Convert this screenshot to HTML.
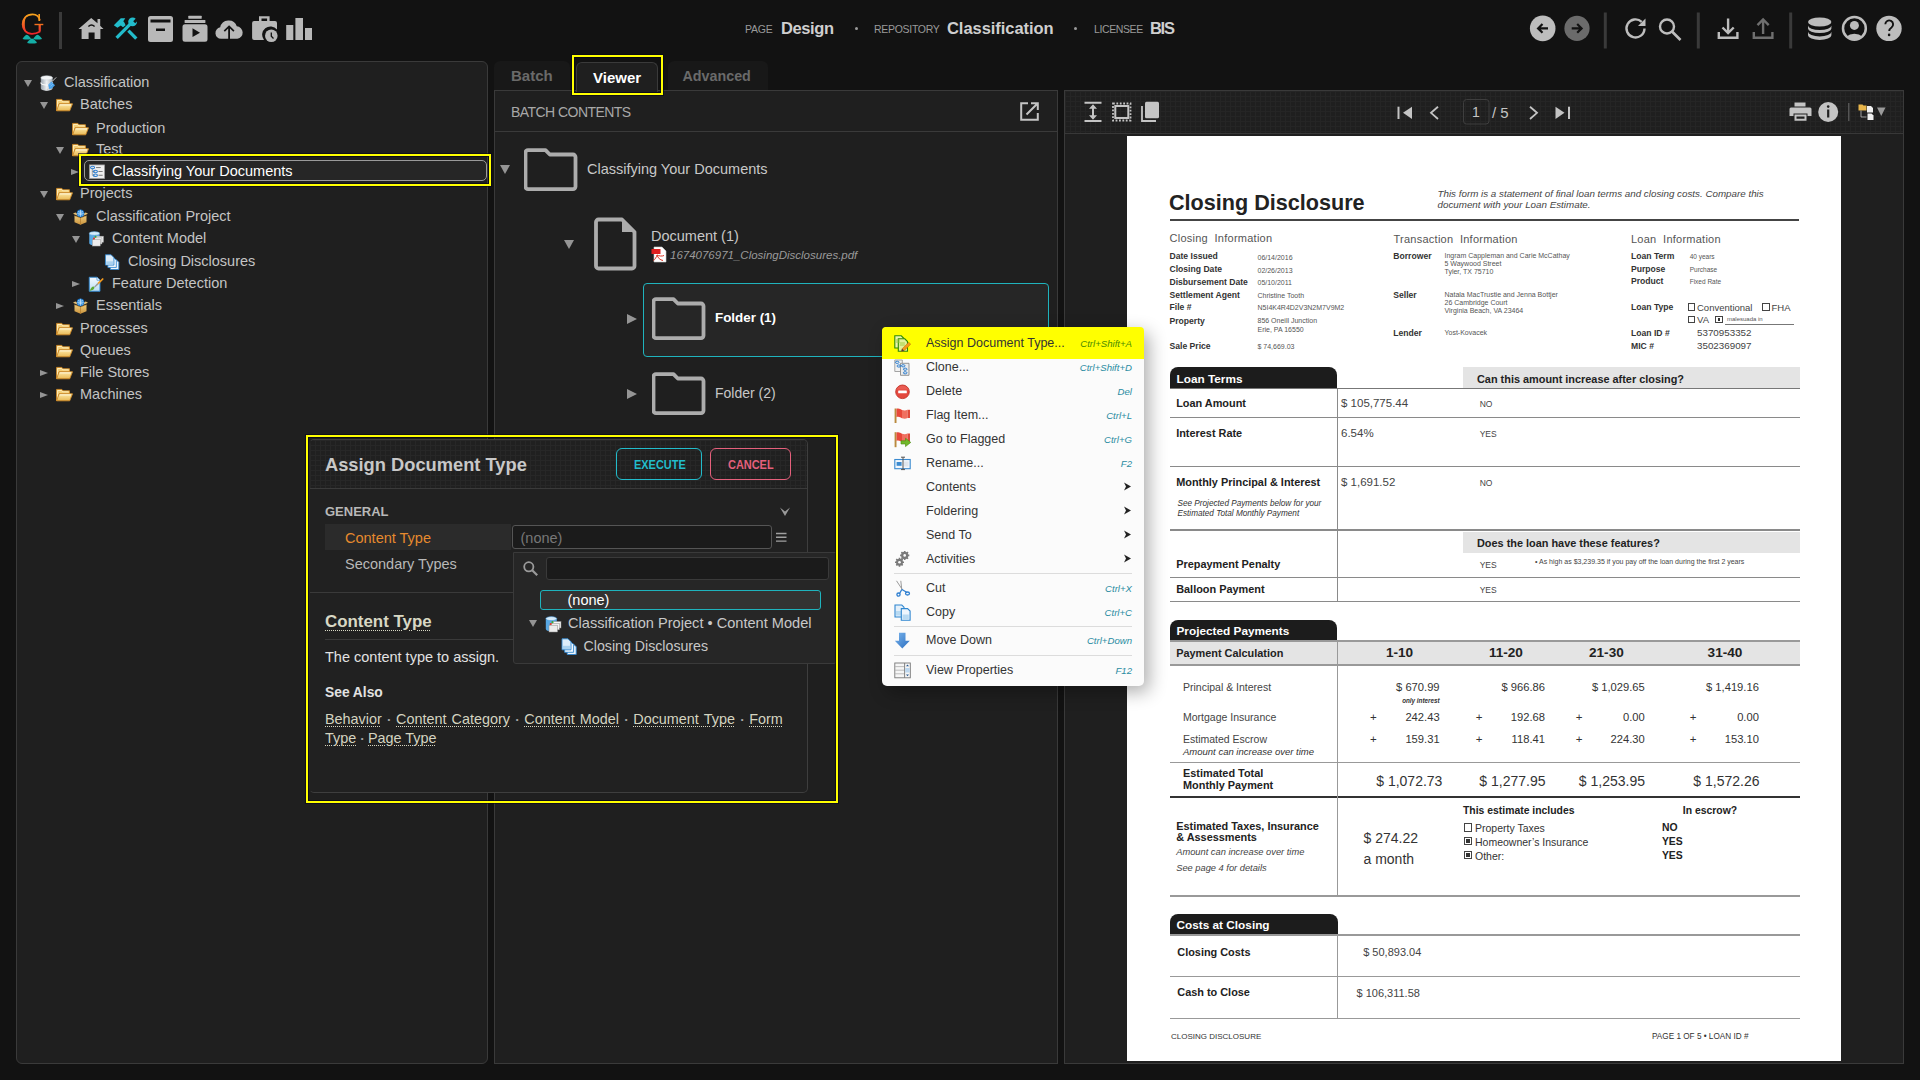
<!DOCTYPE html>
<html><head><meta charset="utf-8">
<style>
*{box-sizing:border-box;margin:0;padding:0}
html,body{width:1920px;height:1080px;overflow:hidden;background:#121212;font-family:"Liberation Sans",sans-serif;color:#c4c4c4}
.a{position:absolute}
.nw{white-space:nowrap}
.panel{position:absolute;background:#1f1f1f;border:1px solid #3a3a3a}
/* header */
.hdr-lbl{position:absolute;top:23px;font-size:10.5px;color:#9a9a9a;letter-spacing:0.2px}
.hdr-val{position:absolute;top:18.5px;font-size:16.5px;font-weight:bold;color:#cfcfcf}
.hdr-dot{position:absolute;top:27px;width:3px;height:3px;border-radius:50%;background:#9a9a9a}
.sep{position:absolute;width:3px;background:#3a3a3a}
/* tree */
.tr{position:absolute;height:22px;font-size:14.5px;line-height:22px;color:#c4c4c4;white-space:nowrap}
.tri-d{position:absolute;width:0;height:0;border-left:4.2px solid transparent;border-right:4.2px solid transparent;border-top:7.3px solid #959595}
.tri-r{position:absolute;width:0;height:0;border-top:3.6px solid transparent;border-bottom:3.6px solid transparent;border-left:8.2px solid #959595}
.ic{position:absolute;width:17px;height:17px}
.lk{text-decoration:underline dotted;text-underline-offset:2px;text-decoration-thickness:1px}
.dt{color:#aaa;font-size:8px;position:relative;top:-2px;padding:0 0.5px}
</style></head>
<body>
<!-- ================= HEADER ================= -->
<div id="header">
<svg class="a" style="left:0;top:0" width="1920" height="57" viewBox="0 0 1920 57">
 <defs>
  <linearGradient id="gG" gradientUnits="userSpaceOnUse" x1="0" y1="14" x2="0" y2="34"><stop offset="0" stop-color="#f7a61c"/><stop offset="1" stop-color="#f0202a"/></linearGradient>
 </defs>
  <path d="M40 20.5C39 16.5 36 14.4 32.6 14.4C26.3 14.4 22.6 18.8 22.6 24.2C22.6 29.8 26.4 33.8 32 33.8C35 33.8 37.6 33 39.6 31.8V24.5" fill="none" stroke="url(#gG)" stroke-width="1.7"/>
 <path d="M22.4 24.2C22.4 19.5 24.5 16.5 27.5 15.3C25.2 17.5 24.8 20.5 24.8 24.2C24.8 28 25.5 30.8 27.8 32.8C24.6 31.5 22.4 28.5 22.4 24.2Z" fill="url(#gG)"/>
 <path d="M38.8 30.5V25h1.9v6.5z" fill="url(#gG)"/>
 <path d="M34.5 24.5H43.3" stroke="#f0701e" stroke-width="1.4"/>
 <path d="M39.2 14v7" stroke="#f49a1c" stroke-width="1.6"/>
 <g fill="#14aea6">
  <path d="M22.5 39.1C23.8 36.8 25.2 35.2 26.8 34.8C28.4 35.2 29.9 36.8 31.2 39.1Q26.8 40.1 22.5 39.1Z"/>
  <path d="M33.2 39.1C34.5 36.8 35.9 35.2 37.5 34.8C39.1 35.2 40.7 36.8 42.1 39.1Q37.6 40.1 33.2 39.1Z"/>
  <path d="M27.1 43C28.4 40.6 30.2 38.9 32 38.5C33.8 38.9 35.6 40.6 37 43Q32 44 27.1 43Z"/>
 </g>
 <rect x="59" y="12" width="3" height="37" fill="#3a3a3a"/>
 <g fill="#b8b8b8">
  <!-- home -->
  <path d="M78.5 29 L91.2 18 L97.5 23.3 L97.5 19 L100.2 19 L100.2 25.7 L103.5 29 L100.4 29 L100.4 39 L94.6 39 L94.6 32.5 L88.6 32.5 L88.6 39 L81.6 39 L81.6 29Z"/>
  <!-- archive -->
  <path fill-rule="evenodd" d="M150.5 16h20a2.5 2.5 0 0 1 2.5 2.5v21a2.5 2.5 0 0 1 -2.5 2.5h-20a2.5 2.5 0 0 1 -2.5 -2.5v-21a2.5 2.5 0 0 1 2.5 -2.5z M150.5 19.5v3h20v-3z M156 28.5v2.5h9v-2.5z"/>
  <!-- play box -->
  <rect x="188.3" y="15.8" width="13.4" height="3" rx="0.5"/>
  <rect x="184.6" y="20" width="20.8" height="2.9" rx="0.5"/>
  <path fill-rule="evenodd" d="M185 24.2h20a2.5 2.5 0 0 1 2.5 2.5v12.5a2.5 2.5 0 0 1 -2.5 2.5h-20a2.5 2.5 0 0 1 -2.5 -2.5v-12.5a2.5 2.5 0 0 1 2.5 -2.5z M192.5 28.3v8.7l7.5-4.35z"/>
  <!-- cloud -->
  <path fill-rule="evenodd" d="M221 38.8 a5.8 5.8 0 0 1 -0.8 -11.5 a8.6 8.6 0 0 1 16.6 -1 a6.3 6.3 0 0 1 0.6 12.5z M228.2 38.8v-10.3l-3.3 3.3-1.2-1.2 5.4-5.4 5.4 5.4-1.2 1.2-3.3-3.3v10.3z"/>
  <!-- briefcase -->
  <path fill-rule="evenodd" d="M259 16.2h10.6v4.8h5.4a2 2 0 0 1 2 2v6.5 a8 8 0 0 0 -13 10.5h-9.9a2 2 0 0 1 -2 -2v-15a2 2 0 0 1 2 -2h4.9z M261.5 18.4v2.6h5.6v-2.6z"/>
  <circle cx="271.3" cy="35.8" r="6.3"/>
  <!-- bars -->
  <rect x="286.2" y="25" width="7.1" height="15"/>
  <rect x="295.4" y="18" width="7.6" height="22"/>
  <rect x="305" y="28" width="7" height="12"/>
 </g>
 <path d="M271.3 32.5v3.8l2.2 2.2" stroke="#121212" stroke-width="1.3" fill="none"/>
 <path d="M88.4 26.6Q91.4 23.4 94.6 26.6" stroke="#121212" stroke-width="1.4" fill="none"/>
 <!-- tools -->
 <g stroke="#22bccb" stroke-width="3.3" fill="none" stroke-linecap="butt">
  <path d="M116.6 37.8L131.2 23.2"/>
  <path d="M128.4 30.6L136.3 38.6"/>
 </g>
 <g fill="#22bccb">
  <circle cx="132.6" cy="21.8" r="4.4"/>
  <path d="M113.8 25.2L120.8 18.3H125.3L123.3 21.2L124.5 22.8L125.6 25.2L123 27.2L120.8 25.6L117.4 27.8Z"/>
 </g>
 <path d="M133.2 21.2L136.6 17.8L138.6 19.8L135.2 23.2Z" fill="#121212"/>
</svg>
<div class="hdr-lbl" style="left:745px;letter-spacing:-0.25px">PAGE</div>
<div class="hdr-val" style="left:781px;letter-spacing:-0.4px">Design</div>
<div class="hdr-dot" style="left:855px"></div>
<div class="hdr-lbl" style="left:874px;letter-spacing:-0.3px">REPOSITORY</div>
<div class="hdr-val" style="left:947px;letter-spacing:-0.05px">Classification</div>
<div class="hdr-dot" style="left:1074px"></div>
<div class="hdr-lbl" style="left:1094px;letter-spacing:-0.4px">LICENSEE</div>
<div class="hdr-val" style="left:1150px;letter-spacing:-1.3px">BIS</div>
<svg class="a" style="left:1500px;top:0" width="420" height="57" viewBox="1500 0 420 57">
 <circle cx="1542.7" cy="28.4" r="12.8" fill="#bdbdbd"/>
 <path d="M1548 28.4h-9.5M1542.5 24l-4.4 4.4 4.4 4.4" stroke="#121212" stroke-width="2.2" fill="none"/>
 <circle cx="1577" cy="28.4" r="12.6" fill="#6b6b6b"/>
 <path d="M1571.7 28.4h9.5M1577.2 24l4.4 4.4-4.4 4.4" stroke="#121212" stroke-width="2.2" fill="none"/>
 <rect x="1603.8" y="12.5" width="3" height="36" fill="#3a3a3a"/>
 <rect x="1696.8" y="12.5" width="3" height="36" fill="#3a3a3a"/>
 <rect x="1789.2" y="12.5" width="3" height="36" fill="#3a3a3a"/>
 <g stroke="#bdbdbd" stroke-width="2.4" fill="none">
  <path d="M1644.5 28.5 a9 9 0 1 1 -2.8 -6.6"/>
  <circle cx="1667" cy="26.5" r="7"/>
  <path d="M1672 31.5l8.5 8.5" stroke-width="2.6"/>
  <path d="M1718.8 32v5.8h18.6v-5.8M1728.1 18.6v14.5M1722.5 27.5l5.6 5.6 5.6-5.6"/>
 </g>
 <path d="M1645.5 18.5v7.5h-7.5z" fill="#bdbdbd"/>
 <g stroke="#6f6f6f" stroke-width="2.4" fill="none">
  <path d="M1753.8 32v5.8h18.6v-5.8M1763.1 34v-14.5M1757.5 25.1l5.6-5.6 5.6 5.6"/>
 </g>
 <g fill="#bdbdbd">
  <ellipse cx="1819.7" cy="22" rx="11.7" ry="4.6"/>
  <path d="M1808 25.5v3a11.7 4.6 0 0 0 23.4 0v-3a11.7 4.6 0 0 1 -23.4 0z"/>
  <path d="M1808 31.8v3.5a11.7 4.6 0 0 0 23.4 0v-3.5a11.7 4.6 0 0 1 -23.4 0z"/>
 </g>
 <circle cx="1854.4" cy="28.4" r="11.4" stroke="#bdbdbd" stroke-width="2.5" fill="none"/>
 <circle cx="1854.4" cy="25.4" r="4.5" fill="#bdbdbd"/>
 <path d="M1846.5 36.5a10 7 0 0 1 15.8 0a11 11 0 0 1 -15.8 0z" fill="#bdbdbd"/>
 <circle cx="1889" cy="28.4" r="12.7" fill="#bdbdbd"/>
 <path d="M1885.3 24.3a3.9 3.9 0 1 1 6.2 3.2c-1.6 1.1-2.3 1.8-2.3 3.6" stroke="#121212" stroke-width="1.9" fill="none"/><circle cx="1889.1" cy="34.9" r="1.3" fill="#121212"/>
</svg>
</div>

<!-- ================= LEFT PANEL ================= -->
<div class="panel" style="left:16px;top:61px;width:472px;height:1003px;border-radius:6px"></div>

<svg width="0" height="0" style="position:absolute">
<defs>
 <linearGradient id="fy" x1="0" y1="0" x2="0" y2="1"><stop offset="0" stop-color="#fde9a8"/><stop offset="1" stop-color="#e9b955"/></linearGradient>
 <linearGradient id="dbg" x1="0" y1="0" x2="1" y2="0"><stop offset="0" stop-color="#9aa4ad"/><stop offset="0.5" stop-color="#eef1f4"/><stop offset="1" stop-color="#a7b0b8"/></linearGradient>
 <linearGradient id="bxg" x1="0" y1="0" x2="0" y2="1"><stop offset="0" stop-color="#f0cc7a"/><stop offset="1" stop-color="#c9923c"/></linearGradient>
 <symbol id="i-fold" viewBox="0 0 17 13">
  <path d="M0.6 0.9h5.2l1.3 1.4h6.4v3H3.1L0.6 12.3z" fill="#f5cf76" stroke="#cf8a28" stroke-width="0.9" stroke-linejoin="round"/>
  <path d="M1.6 2v8M1.6 2h3.8l1.2 1.3h6" stroke="#fff4cc" stroke-width="0.8" fill="none"/>
  <path d="M3.1 5.3h13.4l-2.8 7H0.6z" fill="url(#fy)" stroke="#cf8a28" stroke-width="0.9" stroke-linejoin="round"/>
  <path d="M3.8 6.4h11.3" stroke="#fffbe6" stroke-width="0.9"/>
 </symbol>
 <symbol id="i-db" viewBox="0 0 17 16">
  <path d="M0.8 2.8v10.4c0 1.5 2.6 2.5 5.9 2.5s5.9-1 5.9-2.5v-10.4z" fill="url(#dbg)"/>
  <ellipse cx="6.7" cy="2.8" rx="5.9" ry="2.1" fill="#f3f5f7" stroke="#c5ccd2" stroke-width="0.5"/>
  <path d="M0.8 7.6c0 1.5 2.6 2.5 5.9 2.5s5.9-1 5.9-2.5" stroke="#f8f8f8" stroke-width="1.1" fill="none"/>
  <path d="M8.2 9.8l3.2-3.2 3.6 3.6-3.2 3.2-2.6 0.6z" fill="#4aa2ea"/>
  <path d="M9.3 10.2l2.4-2.4M10.5 11.4l2.4-2.4" stroke="#9fd0f8" stroke-width="0.6"/>
  <path d="M8.6 13.2l-3 3" stroke="#c8c8c8" stroke-width="1"/>
  <path d="M12.6 6l3.6-3.6" stroke="#c8c8c8" stroke-width="1"/>
 </symbol>
 <symbol id="i-box" viewBox="0 0 16 16">
  <path d="M2 6.8l6 2.2 6-2.2v6.4l-6 2.6-6-2.6z" fill="url(#bxg)"/>
  <path d="M8 9v6.8" stroke="#b07a2c" stroke-width="0.7"/>
  <path d="M0.5 4.8l2.2-1.2 5.3 2.1-1.8 1.6zM15.5 4.8l-2.2-1.2-5.3 2.1 1.8 1.6z" fill="#e9c072"/>
  <path d="M2 6.8l6 2.2 6-2.2" stroke="#c99545" stroke-width="0.6" fill="none"/>
  <circle cx="8" cy="4.3" r="3.6" fill="#2f8fe0" stroke="#1a6fc0" stroke-width="0.5"/>
  <path d="M4.8 4.3h6.4M8 0.9v6.8M5.6 2.4c1.4 0.9 3.4 0.9 4.8 0M5.6 6.2c1.4-0.9 3.4-0.9 4.8 0" stroke="#e2f0fc" stroke-width="0.6" fill="none"/>
 </symbol>
 <symbol id="i-cm" viewBox="0 0 17 17">
  <path d="M0.8 2.6v10.4c0 1.3 2.4 2.3 5.5 2.3s5.5-1 5.5-2.3v-10.4z" fill="#58a8e4"/>
  <ellipse cx="6.3" cy="2.6" rx="5.5" ry="2" fill="#d4ebfa" stroke="#3d8fd0" stroke-width="0.5"/>
  <rect x="7.5" y="5.5" width="8.5" height="6.5" fill="#f6f6f6" stroke="#8a8a8a" stroke-width="0.5"/>
  <rect x="5.8" y="7.3" width="8.5" height="6.5" fill="#f2f2f2" stroke="#8a8a8a" stroke-width="0.5"/>
  <rect x="4" y="9.2" width="8.5" height="6.8" fill="#ececec" stroke="#8a8a8a" stroke-width="0.5"/>
  <circle cx="5.8" cy="8" r="1.1" fill="#e03a2a"/>
  <circle cx="7.5" cy="6.2" r="1.1" fill="#3aa83a"/>
 </symbol>
 <symbol id="i-docs" viewBox="0 0 17 17">
  <path d="M6.2 5.8h6l3 3v7.7h-9z" fill="#eef6fd" stroke="#2f86cf" stroke-width="0.9"/>
  <path d="M3.6 3.6h6l3 3v7.7h-9z" fill="#eef6fd" stroke="#2f86cf" stroke-width="0.9"/>
  <path d="M1 0.8h6l3 3v8h-9z" fill="#dcedfa" stroke="#2f86cf" stroke-width="0.9"/>
  <path d="M1.8 7.8h7.4v3.2h-7.4z" fill="#a9d2f0"/>
 </symbol>
 <symbol id="i-feat" viewBox="0 0 17 17">
  <defs><linearGradient id="fdg" x1="0" y1="0" x2="0" y2="1"><stop offset="0" stop-color="#f6fbff"/><stop offset="1" stop-color="#b9dcf4"/></linearGradient></defs>
  <path d="M0.8 1.3h8.2l3.2 3.2v11.7h-11.4z" fill="url(#fdg)" stroke="#2f86cf" stroke-width="1"/>
  <path d="M9 1.3v3.2h3.2" fill="#fff" stroke="#2f86cf" stroke-width="0.7"/>
  <path d="M9.5 7.5l5.5-5.5 1.3 1.3-5.5 5.5z" fill="#f39a1e"/>
  <path d="M6 11.5l3.5-4 1.3 1.3-4 3.5z" fill="#9a9a9a"/>
  <path d="M1 16l2-3.5 2-1.5 1.5 1.5-1.5 2z" fill="#5aa832"/>
 </symbol>
 <symbol id="i-batch" viewBox="0 0 17 15">
  <rect x="0.5" y="0.5" width="16" height="14.5" fill="#efefef" stroke="#9b9b9b" stroke-width="0.8"/>
  <path d="M3.5 3.5v8h3M3.5 7.5h3" stroke="#6b6b6b" stroke-width="0.6" fill="none"/>
  <ellipse cx="3.8" cy="3.3" rx="2.2" ry="1.4" fill="none" stroke="#2f7fd0" stroke-width="1.1"/>
  <ellipse cx="6.8" cy="7.5" rx="2.2" ry="1.4" fill="none" stroke="#2f7fd0" stroke-width="1.1"/>
  <ellipse cx="6.8" cy="11.5" rx="2.2" ry="1.4" fill="none" stroke="#2f7fd0" stroke-width="1.1"/>
  <path d="M7.5 3.3h5M10 7.5h4.5M10 11.5h4.5" stroke="#666" stroke-width="0.9"/>
 </symbol>
</defs></svg>
<div id="tree">
<div class="tri-d" style="left:24px;top:80px"></div><svg class="ic" style="left:40px;top:75px;width:17px;height:16px"><use href="#i-db"/></svg><div class="tr" style="left:64px;top:71px">Classification</div>
<div class="tri-d" style="left:40px;top:102px"></div><svg class="ic" style="left:56px;top:97px;width:17px;height:16px"><use href="#i-fold"/></svg><div class="tr" style="left:80px;top:93px">Batches</div>
<svg class="ic" style="left:72px;top:120.5px;width:17px;height:16px"><use href="#i-fold"/></svg><div class="tr" style="left:96px;top:116.5px">Production</div>
<div class="tri-d" style="left:56px;top:147px"></div><svg class="ic" style="left:72px;top:142px;width:17px;height:16px"><use href="#i-fold"/></svg><div class="tr" style="left:96px;top:138px">Test</div>
<div class="tri-d" style="left:40px;top:191px"></div><svg class="ic" style="left:56px;top:186px;width:17px;height:16px"><use href="#i-fold"/></svg><div class="tr" style="left:80px;top:182px">Projects</div>
<div class="tri-d" style="left:56px;top:214px"></div><svg class="ic" style="left:72px;top:209px;width:17px;height:16px"><use href="#i-box"/></svg><div class="tr" style="left:96px;top:205px">Classification Project</div>
<div class="tri-d" style="left:72px;top:236px"></div><svg class="ic" style="left:88px;top:231px;width:17px;height:16px"><use href="#i-cm"/></svg><div class="tr" style="left:112px;top:227px">Content Model</div>
<svg class="ic" style="left:104px;top:253.5px;width:17px;height:16px"><use href="#i-docs"/></svg><div class="tr" style="left:128px;top:249.5px">Closing Disclosures</div>
<div class="tri-r" style="left:72px;top:280.5px"></div><svg class="ic" style="left:88px;top:276px;width:17px;height:16px"><use href="#i-feat"/></svg><div class="tr" style="left:112px;top:272px">Feature Detection</div>
<div class="tri-r" style="left:56px;top:302.5px"></div><svg class="ic" style="left:72px;top:298px;width:17px;height:16px"><use href="#i-box"/></svg><div class="tr" style="left:96px;top:294px">Essentials</div>
<svg class="ic" style="left:56px;top:320.5px;width:17px;height:16px"><use href="#i-fold"/></svg><div class="tr" style="left:80px;top:316.5px">Processes</div>
<svg class="ic" style="left:56px;top:343px;width:17px;height:16px"><use href="#i-fold"/></svg><div class="tr" style="left:80px;top:339px">Queues</div>
<div class="tri-r" style="left:40px;top:369.5px"></div><svg class="ic" style="left:56px;top:365px;width:17px;height:16px"><use href="#i-fold"/></svg><div class="tr" style="left:80px;top:361px">File Stores</div>
<div class="tri-r" style="left:40px;top:391.5px"></div><svg class="ic" style="left:56px;top:387px;width:17px;height:16px"><use href="#i-fold"/></svg><div class="tr" style="left:80px;top:383px">Machines</div>
<div class="tri-r" style="left:71px;top:168.5px"></div><div class="a" style="left:84px;top:160px;width:403px;height:21px;border:1px solid #9a9a9a;border-radius:5px;background:#262626"></div><svg class="ic" style="left:89px;top:164px;width:16px;height:15px"><use href="#i-batch"/></svg><div class="tr" style="left:112px;top:160px;color:#fff">Classifying Your Documents</div><div class="a" style="left:79px;top:154px;width:412px;height:32px;border:2.5px solid #ffff00;box-shadow:0 0 0 1px rgba(5,5,25,0.6),inset 0 0 0 1px rgba(5,5,25,0.7)"></div>
</div>
<!-- ================= TABS ================= -->
<div class="a" style="left:494px;top:61px;width:76px;height:30px;background:#181818;border-radius:6px 6px 0 0"></div>
<div class="a" style="left:668px;top:61px;width:100px;height:30px;background:#181818;border-radius:6px 6px 0 0"></div>
<div class="a nw" style="left:511px;top:65px;font-size:15px;line-height:22px;font-weight:bold;color:#6a6a6a">Batch</div>
<div class="a nw" style="left:682.5px;top:65px;font-size:14.3px;line-height:22px;font-weight:bold;color:#6a6a6a">Advanced</div>

<!-- ================= MIDDLE PANEL ================= -->
<div class="panel" style="left:494px;top:90px;width:564px;height:974px"></div>
<div class="a" style="left:576px;top:62px;width:82px;height:30px;background:#1f1f1f;border:1px solid #3a3a3a;border-bottom:none;border-radius:6px 6px 0 0"></div>
<div class="a nw" style="left:593px;top:66.5px;font-size:15px;line-height:22px;font-weight:bold;color:#fff">Viewer</div>
<div class="a" style="left:572px;top:55px;width:91px;height:40px;border:2.5px solid #ffff00;box-shadow:0 0 0 1px rgba(5,5,25,0.6),inset 0 0 0 1px rgba(5,5,25,0.7)"></div>
<div class="a nw" style="left:511px;top:101.5px;font-size:14px;line-height:20px;color:#a8a8a8;letter-spacing:-0.55px">BATCH CONTENTS</div>
<div class="a" style="left:495px;top:130.5px;width:562px;height:1px;background:#3a3a3a"></div>
<svg class="a" style="left:1018px;top:100px" width="24" height="24" viewBox="0 0 24 24">
 <path d="M10 3.2H3.2v16.6h16.6V13" stroke="#c4c4c4" stroke-width="2" fill="none"/>
 <path d="M8.5 14.5L19 4M13 3.2h6.8V10" stroke="#c4c4c4" stroke-width="2" fill="none"/>
</svg>
<svg width="0" height="0" style="position:absolute"><defs>
 <symbol id="bigfold" viewBox="0 0 54 43"><path d="M4 2.2h17.5l4.3 4.3h23.2a2.5 2.5 0 0 1 2.5 2.5v29.6a2.5 2.5 0 0 1 -2.5 2.5h-45a2.5 2.5 0 0 1 -2.5 -2.5v-34a2.5 2.5 0 0 1 2.5 -2.5z" fill="none" stroke="#acacac" stroke-width="3.8" stroke-linejoin="round"/></symbol>
</defs></svg>
<div class="tri-d" style="left:499.5px;top:165px;border-left-width:5px;border-right-width:5px;border-top-width:9px"></div>
<svg class="a" style="left:524px;top:148px" width="54" height="43"><use href="#bigfold"/></svg>
<div class="a nw" style="left:587px;top:158px;font-size:14.5px;line-height:22px;color:#c8c8c8">Classifying Your Documents</div>

<div class="tri-d" style="left:563.5px;top:240px;border-left-width:5px;border-right-width:5px;border-top-width:9px"></div>
<svg class="a" style="left:593.5px;top:217px" width="44" height="54" viewBox="0 0 44 54"><path d="M4.5 2.5h23.5l12.5 12.5v34a2.5 2.5 0 0 1 -2.5 2.5h-33.5a2.5 2.5 0 0 1 -2.5 -2.5v-44a2.5 2.5 0 0 1 2.5 -2.5z" fill="none" stroke="#acacac" stroke-width="3.8" stroke-linejoin="round"/><path d="M28 2.5v12.5h12.5z" fill="#acacac"/></svg>
<div class="a nw" style="left:651px;top:225px;font-size:14.5px;line-height:22px;color:#c8c8c8">Document (1)</div>
<svg class="a" style="left:651px;top:246px" width="17" height="17" viewBox="0 0 17 17"><path d="M3 1h8l4 4v11h-12z" fill="#fff" stroke="#ccc" stroke-width="0.6"/><path d="M0.5 3h9v5h-9z" fill="#e02020"/><path d="M6 9c1 3 3 5 6 5.5M6 9c-0.5 2-2 4.5-3.5 5.5M6 9c2 1 5 1.5 7 0.5" stroke="#d32" stroke-width="1" fill="none"/></svg>
<div class="a nw" style="left:670px;top:247px;font-size:11.5px;line-height:16px;color:#9a9a9a;font-style:italic">1674076971_ClosingDisclosures.pdf</div>

<div class="a" style="left:642.5px;top:283px;width:406.5px;height:73.5px;border:1.5px solid #1fb3bd;border-radius:4px;background:#262626"></div>
<div class="tri-r" style="left:627px;top:313.5px;border-top-width:5.5px;border-bottom-width:5.5px;border-left-width:10px"></div>
<svg class="a" style="left:652px;top:297px" width="54" height="43"><use href="#bigfold"/></svg>
<div class="a nw" style="left:715px;top:307px;font-size:13.4px;line-height:22px;color:#fff;font-weight:bold">Folder (1)</div>

<div class="tri-r" style="left:627px;top:388.5px;border-top-width:5.5px;border-bottom-width:5.5px;border-left-width:10px"></div>
<svg class="a" style="left:652px;top:372px" width="54" height="43"><use href="#bigfold"/></svg>
<div class="a nw" style="left:715px;top:382px;font-size:14px;line-height:22px;color:#c8c8c8">Folder (2)</div>


<!-- ================= RIGHT PANEL ================= -->
<div class="panel" style="left:1064px;top:90px;width:840px;height:974px"></div>
<div class="a" style="left:1065px;top:91px;width:838px;height:42.5px;background-color:#1f1f1f;background-image:linear-gradient(#252525 1px,transparent 1px),linear-gradient(90deg,#252525 1px,transparent 1px);background-size:5px 5px;border-bottom:1px solid #383838"></div>
<svg class="a" style="left:1064px;top:90px" width="840" height="44" viewBox="1064 90 840 44">
 <g stroke="#c4c4c4" fill="none">
  <path d="M1084.5 102.8h17M1084.5 121h17" stroke-width="2"/>
  <path d="M1093 106v12" stroke-width="2"/>
  <rect x="1115.3" y="106" width="13" height="12" stroke-width="2"/>
  <rect x="1113" y="103.5" width="17.5" height="17" stroke-width="1.8" stroke-dasharray="1.8 1.6"/>
  <path d="M1142 106v15h14" stroke-width="1.8"/>
 </g>
 <g fill="#c4c4c4">
  <path d="M1093 104.3l4 4.5h-8z M1093 119.7l4-4.5h-8z"/>
  <rect x="1145" y="101.8" width="14" height="16.5" rx="1.5"/>
  <rect x="1397.5" y="106.7" width="2" height="12.3"/>
  <path d="M1412 106.7v12.3l-9-6.15z"/>
  <path d="M1555.5 106.7v12.3l9-6.15z"/>
  <rect x="1568" y="106.7" width="2" height="12.3"/>
 </g>
 <g stroke="#c4c4c4" stroke-width="1.8" fill="none">
  <path d="M1438 106.7l-7 6.15 7 6.15"/>
  <path d="M1530 106.7l7 6.15-7 6.15"/>
 </g>
 <rect x="1463.5" y="99.5" width="25.5" height="24.5" rx="3" fill="none" stroke="#3e3e3e" stroke-width="1"/>
 <text x="1476" y="117" text-anchor="middle" font-family="Liberation Sans" font-size="14" fill="#c4c4c4">1</text>
 <text x="1492" y="117.5" font-family="Liberation Sans" font-size="15" fill="#c4c4c4">/ 5</text>
 <g fill="#c4c4c4">
  <path d="M1794.5 102.5h11v4h-11z"/>
  <path d="M1791 107.5h19a1.5 1.5 0 0 1 1.5 1.5v7h-4v-2.5h-14v2.5h-4v-7a1.5 1.5 0 0 1 1.5-1.5z"/>
  <path d="M1794.5 114.5h12v6.3h-12z M1796.5 116.5v2.3h8v-2.3z" fill-rule="evenodd"/>
  <circle cx="1828.2" cy="112" r="10"/>
 </g>
 <rect x="1827.1" y="109.5" width="2.2" height="8" fill="#222"/>
 <circle cx="1828.2" cy="106.6" r="1.3" fill="#222"/>
 <rect x="1848" y="103" width="1.5" height="18" fill="#555"/>
 <path d="M1858.5 104.5h4l1 1h3v5h-8z" fill="#e8b54a"/>
 <path d="M1867 106h4l2 2v4.5h-6z" fill="#f0f0f0"/>
 <path d="M1867.5 113.5h4l2 2v4.5h-6z" fill="#f0f0f0"/>
 <path d="M1861 110.5v6.5h5.5" stroke="#bbb" stroke-width="0.8" fill="none"/>
 <path d="M1877 107.5h8.5l-4.25 8.5z" fill="#9a9a9a"/>
</svg>
<div class="a" style="left:1065px;top:134px;width:838px;height:929px;overflow:hidden">
<div class="a" style="left:-1065px;top:-134px;width:1920px;height:1080px">
<div class="a" style="left:1127px;top:136px;width:714.00px;height:925.00px;background:#fff"></div>
<div class="a nw" style="left:1169px;top:192.32px;font-size:21.6px;line-height:21.6px;font-weight:bold;color:#222;">Closing Disclosure</div>
<div class="a nw" style="left:1437.5px;top:188.70px;font-size:9.8px;line-height:9.8px;font-style:italic;color:#444;">This form is a statement of final loan terms and closing costs. Compare this</div>
<div class="a nw" style="left:1437.5px;top:200.10px;font-size:9.8px;line-height:9.8px;font-style:italic;color:#444;">document with your Loan Estimate.</div>
<div class="a" style="left:1169.5px;top:218.70000000000002px;width:629.50px;height:2.20px;background:#444"></div>
<div class="a nw" style="left:1169.5px;top:233.19px;font-size:11px;line-height:11px;color:#555;letter-spacing:0.25px">Closing&nbsp; Information</div>
<div class="a nw" style="left:1169.5px;top:252.42px;font-size:8.6px;line-height:8.6px;font-weight:bold;color:#333;">Date Issued</div>
<div class="a nw" style="left:1169.5px;top:265.22px;font-size:8.6px;line-height:8.6px;font-weight:bold;color:#333;">Closing Date</div>
<div class="a nw" style="left:1169.5px;top:277.72px;font-size:8.6px;line-height:8.6px;font-weight:bold;color:#333;">Disbursement Date</div>
<div class="a nw" style="left:1169.5px;top:291.02px;font-size:8.6px;line-height:8.6px;font-weight:bold;color:#333;">Settlement Agent</div>
<div class="a nw" style="left:1169.5px;top:303.02px;font-size:8.6px;line-height:8.6px;font-weight:bold;color:#333;">File #</div>
<div class="a nw" style="left:1169.5px;top:316.52px;font-size:8.6px;line-height:8.6px;font-weight:bold;color:#333;">Property</div>
<div class="a nw" style="left:1169.5px;top:341.92px;font-size:8.6px;line-height:8.6px;font-weight:bold;color:#333;">Sale Price</div>
<div class="a nw" style="left:1257.5px;top:253.77px;font-size:7px;line-height:7px;color:#555;">06/14/2016</div>
<div class="a nw" style="left:1257.5px;top:266.57px;font-size:7px;line-height:7px;color:#555;">02/26/2013</div>
<div class="a nw" style="left:1257.5px;top:279.07px;font-size:7px;line-height:7px;color:#555;">05/10/2011</div>
<div class="a nw" style="left:1257.5px;top:291.57px;font-size:7px;line-height:7px;color:#555;">Christine Tooth</div>
<div class="a nw" style="left:1257.5px;top:303.57px;font-size:7px;line-height:7px;color:#555;">N5I4K4R4D2V3N2M7V9M2</div>
<div class="a nw" style="left:1257.5px;top:317.37px;font-size:7px;line-height:7px;color:#555;">856 Oneill Junction</div>
<div class="a nw" style="left:1257.5px;top:326.07px;font-size:7px;line-height:7px;color:#555;">Erie, PA 16550</div>
<div class="a nw" style="left:1257.5px;top:343.27px;font-size:7px;line-height:7px;color:#555;">$ 74,669.03</div>
<div class="a nw" style="left:1393.5px;top:233.69px;font-size:11px;line-height:11px;color:#555;letter-spacing:0.25px">Transaction&nbsp; Information</div>
<div class="a nw" style="left:1393.3px;top:252.42px;font-size:8.6px;line-height:8.6px;font-weight:bold;color:#333;">Borrower</div>
<div class="a nw" style="left:1393.3px;top:291.02px;font-size:8.6px;line-height:8.6px;font-weight:bold;color:#333;">Seller</div>
<div class="a nw" style="left:1393.3px;top:329.02px;font-size:8.6px;line-height:8.6px;font-weight:bold;color:#333;">Lender</div>
<div class="a nw" style="left:1444.5px;top:251.67px;font-size:7px;line-height:7px;color:#555;">Ingram Cappleman and Carie McCathay</div>
<div class="a nw" style="left:1444.5px;top:259.57px;font-size:7px;line-height:7px;color:#555;">5 Waywood Street</div>
<div class="a nw" style="left:1444.5px;top:268.07px;font-size:7px;line-height:7px;color:#555;">Tyler, TX 75710</div>
<div class="a nw" style="left:1444.5px;top:290.87px;font-size:7px;line-height:7px;color:#555;">Natala MacTrustie and Jenna Bottjer</div>
<div class="a nw" style="left:1444.5px;top:298.67px;font-size:7px;line-height:7px;color:#555;">26 Cambridge Court</div>
<div class="a nw" style="left:1444.5px;top:307.27px;font-size:7px;line-height:7px;color:#555;">Virginia Beach, VA 23464</div>
<div class="a nw" style="left:1444.5px;top:329.27px;font-size:7px;line-height:7px;color:#555;">Yost-Kovacek</div>
<div class="a nw" style="left:1631px;top:233.69px;font-size:11px;line-height:11px;color:#555;letter-spacing:0.25px">Loan&nbsp; Information</div>
<div class="a nw" style="left:1631px;top:252.12px;font-size:8.6px;line-height:8.6px;font-weight:bold;color:#333;">Loan Term</div>
<div class="a nw" style="left:1631px;top:265.02px;font-size:8.6px;line-height:8.6px;font-weight:bold;color:#333;">Purpose</div>
<div class="a nw" style="left:1631px;top:277.32px;font-size:8.6px;line-height:8.6px;font-weight:bold;color:#333;">Product</div>
<div class="a nw" style="left:1631px;top:303.02px;font-size:8.6px;line-height:8.6px;font-weight:bold;color:#333;">Loan Type</div>
<div class="a nw" style="left:1631px;top:328.72px;font-size:8.6px;line-height:8.6px;font-weight:bold;color:#333;">Loan ID #</div>
<div class="a nw" style="left:1631px;top:341.92px;font-size:8.6px;line-height:8.6px;font-weight:bold;color:#333;">MIC #</div>
<div class="a nw" style="left:1689.7px;top:253.50px;font-size:6.5px;line-height:6.5px;color:#555;">40 years</div>
<div class="a nw" style="left:1689.7px;top:266.50px;font-size:6.5px;line-height:6.5px;color:#555;">Purchase</div>
<div class="a nw" style="left:1689.7px;top:278.80px;font-size:6.5px;line-height:6.5px;color:#555;">Fixed Rate</div>
<div class="a" style="left:1687.5px;top:303.00px;width:7.5px;height:7.5px;border:0.9px solid #444;background:#fff"></div>
<div class="a nw" style="left:1697px;top:302.76px;font-size:9.5px;line-height:9.5px;color:#444;">Conventional</div>
<div class="a" style="left:1762px;top:303.00px;width:7.5px;height:7.5px;border:0.9px solid #444;background:#fff"></div>
<div class="a nw" style="left:1771.5px;top:302.76px;font-size:9.5px;line-height:9.5px;color:#444;">FHA</div>
<div class="a" style="left:1687.5px;top:315.50px;width:7.5px;height:7.5px;border:0.9px solid #444;background:#fff"></div>
<div class="a nw" style="left:1697px;top:314.96px;font-size:9.5px;line-height:9.5px;color:#444;">VA</div>
<div class="a" style="left:1715px;top:315.50px;width:7.5px;height:7.5px;border:0.9px solid #444;background:#fff"></div>
<div class="a" style="left:1717.5px;top:318.00px;width:2.5px;height:2.5px;background:#333"></div>
<div class="a nw" style="left:1727px;top:316.42px;font-size:6px;line-height:6px;color:#555;">malesuada in</div>
<div class="a" style="left:1725px;top:324.25px;width:69.00px;height:0.90px;background:#777"></div>
<div class="a nw" style="left:1697px;top:328.20px;font-size:9.8px;line-height:9.8px;color:#444;">5370953352</div>
<div class="a nw" style="left:1697px;top:341.20px;font-size:9.8px;line-height:9.8px;color:#444;">3502369097</div>
<div class="a" style="left:1169.5px;top:367px;width:167.30px;height:21.60px;background:#1c1c1c;border-radius:8px 8px 0 0"></div>
<div class="a nw" style="left:1176.5px;top:373.71px;font-size:11.8px;line-height:11.8px;font-weight:bold;color:#fff;">Loan Terms</div>
<div class="a" style="left:1463px;top:367px;width:337.00px;height:21.00px;background:#e4e4e4"></div>
<div class="a nw" style="left:1477px;top:374.27px;font-size:10.9px;line-height:10.9px;font-weight:bold;color:#222;">Can this amount increase after closing?</div>
<div class="a" style="left:1169.5px;top:387.85px;width:630.50px;height:1.50px;background:#777"></div>
<div class="a nw" style="left:1176.2px;top:397.87px;font-size:10.9px;line-height:10.9px;font-weight:bold;color:#222;">Loan Amount</div>
<div class="a nw" style="left:1341px;top:397.77px;font-size:11.5px;line-height:11.5px;color:#444;">$ 105,775.44</div>
<div class="a nw" style="left:1479.7px;top:399.80px;font-size:8.5px;line-height:8.5px;color:#444;">NO</div>
<div class="a" style="left:1169.5px;top:416.95000000000005px;width:630.50px;height:1.30px;background:#8a8a8a"></div>
<div class="a nw" style="left:1176.2px;top:428.27px;font-size:10.9px;line-height:10.9px;font-weight:bold;color:#222;">Interest Rate</div>
<div class="a nw" style="left:1341px;top:428.27px;font-size:11.5px;line-height:11.5px;color:#444;">6.54%</div>
<div class="a nw" style="left:1479.7px;top:430.30px;font-size:8.5px;line-height:8.5px;color:#444;">YES</div>
<div class="a" style="left:1169.5px;top:465.75px;width:630.50px;height:1.30px;background:#8a8a8a"></div>
<div class="a nw" style="left:1176.2px;top:477.07px;font-size:10.9px;line-height:10.9px;font-weight:bold;color:#222;">Monthly Principal &amp; Interest</div>
<div class="a nw" style="left:1341px;top:477.27px;font-size:11.5px;line-height:11.5px;color:#444;">$ 1,691.52</div>
<div class="a nw" style="left:1479.7px;top:479.30px;font-size:8.5px;line-height:8.5px;color:#444;">NO</div>
<div class="a nw" style="left:1177.5px;top:499.56px;font-size:8.2px;line-height:8.2px;font-style:italic;color:#333;">See Projected Payments below for your</div>
<div class="a nw" style="left:1177.5px;top:510.06px;font-size:8.2px;line-height:8.2px;font-style:italic;color:#333;">Estimated Total Monthly Payment</div>
<div class="a" style="left:1169.5px;top:529.35px;width:630.50px;height:1.30px;background:#8a8a8a"></div>
<div class="a" style="left:1463px;top:531.7px;width:337.00px;height:20.90px;background:#e4e4e4"></div>
<div class="a nw" style="left:1477px;top:538.27px;font-size:10.9px;line-height:10.9px;font-weight:bold;color:#222;">Does the loan have these features?</div>
<div class="a nw" style="left:1176.2px;top:559.07px;font-size:10.9px;line-height:10.9px;font-weight:bold;color:#222;">Prepayment Penalty</div>
<div class="a nw" style="left:1479.7px;top:560.80px;font-size:8.5px;line-height:8.5px;color:#444;">YES</div>
<div class="a nw" style="left:1535px;top:558.17px;font-size:7px;line-height:7px;color:#444;">• As high as $3,239.35 if you pay off the loan during the first 2 years</div>
<div class="a" style="left:1169.5px;top:576.75px;width:630.50px;height:1.30px;background:#8a8a8a"></div>
<div class="a nw" style="left:1176.2px;top:583.77px;font-size:10.9px;line-height:10.9px;font-weight:bold;color:#222;">Balloon Payment</div>
<div class="a nw" style="left:1479.7px;top:585.80px;font-size:8.5px;line-height:8.5px;color:#444;">YES</div>
<div class="a" style="left:1169.5px;top:601.15px;width:630.50px;height:1.30px;background:#8a8a8a"></div>
<div class="a" style="left:1336.6499999999999px;top:388.6px;width:1.30px;height:213.20px;background:#8a8a8a"></div>
<div class="a" style="left:1169.5px;top:619.8px;width:167.30px;height:21.20px;background:#1c1c1c;border-radius:8px 8px 0 0"></div>
<div class="a nw" style="left:1176.5px;top:626.21px;font-size:11.8px;line-height:11.8px;font-weight:bold;color:#fff;">Projected Payments</div>
<div class="a" style="left:1169.5px;top:640.7px;width:630.50px;height:24.40px;background:#e4e4e4"></div>
<div class="a" style="left:1169.5px;top:640.0px;width:630.50px;height:2.00px;background:#999"></div>
<div class="a" style="left:1169.5px;top:664.1px;width:630.50px;height:2.00px;background:#999"></div>
<div class="a nw" style="left:1176.2px;top:647.87px;font-size:10.9px;line-height:10.9px;font-weight:bold;color:#222;">Payment Calculation</div>
<div class="a nw" style="left:1399.5px;transform:translateX(-50%);top:645.99px;font-size:13.6px;line-height:13.6px;font-weight:bold;color:#222;">1-10</div>
<div class="a nw" style="left:1505.9px;transform:translateX(-50%);top:645.99px;font-size:13.6px;line-height:13.6px;font-weight:bold;color:#222;">11-20</div>
<div class="a nw" style="left:1606.4px;transform:translateX(-50%);top:645.99px;font-size:13.6px;line-height:13.6px;font-weight:bold;color:#222;">21-30</div>
<div class="a nw" style="left:1725px;transform:translateX(-50%);top:645.99px;font-size:13.6px;line-height:13.6px;font-weight:bold;color:#222;">31-40</div>
<div class="a nw" style="left:1183px;top:682.11px;font-size:10.5px;line-height:10.5px;color:#444;">Principal &amp; Interest</div>
<div class="a nw" style="left:1183px;top:712.11px;font-size:10.5px;line-height:10.5px;color:#444;">Mortgage Insurance</div>
<div class="a nw" style="left:1183px;top:734.41px;font-size:10.5px;line-height:10.5px;color:#444;">Estimated Escrow</div>
<div class="a nw" style="left:1183px;top:746.76px;font-size:9.5px;line-height:9.5px;font-style:italic;color:#333;">Amount can increase over time</div>
<div class="a nw" style="right:480.40px;top:682.02px;font-size:11.2px;line-height:11.2px;color:#333;">$ 670.99</div>
<div class="a nw" style="right:375.00px;top:682.02px;font-size:11.2px;line-height:11.2px;color:#333;">$ 966.86</div>
<div class="a nw" style="right:275.20px;top:682.02px;font-size:11.2px;line-height:11.2px;color:#333;">$ 1,029.65</div>
<div class="a nw" style="right:161.10px;top:682.02px;font-size:11.2px;line-height:11.2px;color:#333;">$ 1,419.16</div>
<div class="a nw" style="right:480.40px;top:698.17px;font-size:6.3px;line-height:6.3px;font-weight:bold;font-style:italic;color:#333;">only interest</div>
<div class="a nw" style="right:480.40px;top:712.02px;font-size:11.2px;line-height:11.2px;color:#333;">242.43</div>
<div class="a nw" style="right:375.00px;top:712.02px;font-size:11.2px;line-height:11.2px;color:#333;">192.68</div>
<div class="a nw" style="right:275.20px;top:712.02px;font-size:11.2px;line-height:11.2px;color:#333;">0.00</div>
<div class="a nw" style="right:161.10px;top:712.02px;font-size:11.2px;line-height:11.2px;color:#333;">0.00</div>
<div class="a nw" style="right:480.40px;top:734.32px;font-size:11.2px;line-height:11.2px;color:#333;">159.31</div>
<div class="a nw" style="right:375.00px;top:734.32px;font-size:11.2px;line-height:11.2px;color:#333;">118.41</div>
<div class="a nw" style="right:275.20px;top:734.32px;font-size:11.2px;line-height:11.2px;color:#333;">224.30</div>
<div class="a nw" style="right:161.10px;top:734.32px;font-size:11.2px;line-height:11.2px;color:#333;">153.10</div>
<div class="a nw" style="left:1373.3px;transform:translateX(-50%);top:711.77px;font-size:11.5px;line-height:11.5px;color:#333;">+</div>
<div class="a nw" style="left:1373.3px;transform:translateX(-50%);top:734.07px;font-size:11.5px;line-height:11.5px;color:#333;">+</div>
<div class="a nw" style="left:1479px;transform:translateX(-50%);top:711.77px;font-size:11.5px;line-height:11.5px;color:#333;">+</div>
<div class="a nw" style="left:1479px;transform:translateX(-50%);top:734.07px;font-size:11.5px;line-height:11.5px;color:#333;">+</div>
<div class="a nw" style="left:1579px;transform:translateX(-50%);top:711.77px;font-size:11.5px;line-height:11.5px;color:#333;">+</div>
<div class="a nw" style="left:1579px;transform:translateX(-50%);top:734.07px;font-size:11.5px;line-height:11.5px;color:#333;">+</div>
<div class="a nw" style="left:1693px;transform:translateX(-50%);top:711.77px;font-size:11.5px;line-height:11.5px;color:#333;">+</div>
<div class="a nw" style="left:1693px;transform:translateX(-50%);top:734.07px;font-size:11.5px;line-height:11.5px;color:#333;">+</div>
<div class="a" style="left:1169.5px;top:761.75px;width:630.50px;height:1.50px;background:#999"></div>
<div class="a nw" style="left:1183px;top:768.27px;font-size:10.9px;line-height:10.9px;font-weight:bold;color:#222;">Estimated Total</div>
<div class="a nw" style="left:1183px;top:779.77px;font-size:10.9px;line-height:10.9px;font-weight:bold;color:#222;">Monthly Payment</div>
<div class="a nw" style="right:477.60px;top:773.65px;font-size:14px;line-height:14px;color:#333;">$ 1,072.73</div>
<div class="a nw" style="right:374.50px;top:773.65px;font-size:14px;line-height:14px;color:#333;">$ 1,277.95</div>
<div class="a nw" style="right:275.00px;top:773.65px;font-size:14px;line-height:14px;color:#333;">$ 1,253.95</div>
<div class="a nw" style="right:160.50px;top:773.65px;font-size:14px;line-height:14px;color:#333;">$ 1,572.26</div>
<div class="a" style="left:1169.5px;top:796.3px;width:630.50px;height:2.20px;background:#333"></div>
<div class="a nw" style="left:1176.2px;top:820.57px;font-size:10.9px;line-height:10.9px;font-weight:bold;color:#222;">Estimated Taxes, Insurance</div>
<div class="a nw" style="left:1176.2px;top:831.77px;font-size:10.9px;line-height:10.9px;font-weight:bold;color:#222;">&amp; Assessments</div>
<div class="a nw" style="left:1176.2px;top:848.13px;font-size:9.3px;line-height:9.3px;font-style:italic;color:#444;">Amount can increase over time</div>
<div class="a nw" style="left:1176.2px;top:863.83px;font-size:9.3px;line-height:9.3px;font-style:italic;color:#444;">See page 4 for details</div>
<div class="a nw" style="left:1363.5px;top:831.15px;font-size:14px;line-height:14px;color:#333;">$ 274.22</div>
<div class="a nw" style="left:1363.5px;top:852.15px;font-size:14px;line-height:14px;color:#333;">a month</div>
<div class="a nw" style="left:1463px;top:806.00px;font-size:10.4px;line-height:10.4px;font-weight:bold;color:#222;">This estimate includes</div>
<div class="a" style="left:1463.5px;top:823.00px;width:8.5px;height:8.5px;border:0.9px solid #444;background:#fff"></div>
<div class="a nw" style="left:1475px;top:822.71px;font-size:10.5px;line-height:10.5px;color:#333;">Property Taxes</div>
<div class="a" style="left:1463.5px;top:836.90px;width:8.5px;height:8.5px;border:0.9px solid #444;background:#fff"></div>
<div class="a" style="left:1466.0px;top:839.40px;width:3.5px;height:3.5px;background:#333"></div>
<div class="a nw" style="left:1475px;top:836.61px;font-size:10.5px;line-height:10.5px;color:#333;">Homeowner’s Insurance</div>
<div class="a" style="left:1463.5px;top:850.90px;width:8.5px;height:8.5px;border:0.9px solid #444;background:#fff"></div>
<div class="a" style="left:1466.0px;top:853.40px;width:3.5px;height:3.5px;background:#333"></div>
<div class="a nw" style="left:1475px;top:850.61px;font-size:10.5px;line-height:10.5px;color:#333;">Other:</div>
<div class="a nw" style="left:1710px;transform:translateX(-50%);top:806.00px;font-size:10.4px;line-height:10.4px;font-weight:bold;color:#222;">In escrow?</div>
<div class="a nw" style="left:1661.9px;top:822.80px;font-size:10.4px;line-height:10.4px;font-weight:bold;color:#222;">NO</div>
<div class="a nw" style="left:1661.9px;top:836.70px;font-size:10.4px;line-height:10.4px;font-weight:bold;color:#222;">YES</div>
<div class="a nw" style="left:1661.9px;top:850.70px;font-size:10.4px;line-height:10.4px;font-weight:bold;color:#222;">YES</div>
<div class="a" style="left:1169.5px;top:895.35px;width:630.50px;height:1.50px;background:#999"></div>
<div class="a" style="left:1336.55px;top:641px;width:1.50px;height:255.10px;background:#999"></div>
<div class="a" style="left:1169.5px;top:913.7px;width:168.20px;height:21.30px;background:#1c1c1c;border-radius:8px 8px 0 0"></div>
<div class="a nw" style="left:1176.5px;top:920.31px;font-size:11.8px;line-height:11.8px;font-weight:bold;color:#fff;">Costs at Closing</div>
<div class="a" style="left:1169.5px;top:934.05px;width:630.50px;height:1.50px;background:#999"></div>
<div class="a nw" style="left:1177.3px;top:946.57px;font-size:10.9px;line-height:10.9px;font-weight:bold;color:#222;">Closing Costs</div>
<div class="a nw" style="left:1363.2px;top:946.69px;font-size:11px;line-height:11px;color:#444;">$ 50,893.04</div>
<div class="a" style="left:1169.5px;top:975.65px;width:630.50px;height:1.50px;background:#999"></div>
<div class="a nw" style="left:1177.3px;top:987.37px;font-size:10.9px;line-height:10.9px;font-weight:bold;color:#222;">Cash to Close</div>
<div class="a nw" style="left:1356.5px;top:987.69px;font-size:11px;line-height:11px;color:#444;">$ 106,311.58</div>
<div class="a" style="left:1169.5px;top:1017.75px;width:630.50px;height:1.50px;background:#999"></div>
<div class="a" style="left:1336.95px;top:934.8px;width:1.50px;height:83.70px;background:#999"></div>
<div class="a nw" style="left:1171px;top:1033.23px;font-size:8px;line-height:8px;color:#333;">CLOSING DISCLOSURE</div>
<div class="a nw" style="left:1652px;top:1033.06px;font-size:8.2px;line-height:8.2px;color:#333;">PAGE 1 OF 5 • LOAN ID #</div>
</div></div>


<!-- ================= CONTEXT MENU ================= -->
<div class="a" style="left:882px;top:327px;width:262px;height:359px;background:#fbfbfb;border-radius:5px;box-shadow:5px 6px 18px rgba(0,0,0,0.32)"></div>
<div class="a" style="left:882px;top:327px;width:262px;height:32px;background:#ffff00;border-radius:4px 4px 0 0"></div>
<svg class="a" style="left:893.5px;top:335.4px" width="17" height="17" viewBox="0 0 17 17"><path d="M0.8 0.8h6.5l2.7 2.7v9.5h-9.2z" fill="#eaf6b0" stroke="#2f8a00" stroke-width="1.1"/><path d="M4.3 3.8h6.5l2.7 2.7v9.8h-9.2z" fill="#e2f29a" stroke="#2f8a00" stroke-width="1.1"/><path d="M2 5h4M2 7h4M5.8 8h5M5.8 10h5" stroke="#9cc840" stroke-width="0.9"/><path d="M7.3 16.6l0.8-2.8 6.6-6.6 2 2-6.6 6.6z" fill="#f29a1a" stroke="#b86a00" stroke-width="0.5"/><path d="M7.3 16.6l0.8-2.8 2 2z" fill="#444"/></svg><div class="a nw" style="left:926px;top:334.4px;font-size:12.5px;line-height:18px;color:#333">Assign Document Type...</div><div class="a nw" style="right:788px;top:336.4px;font-size:9.6px;line-height:15px;color:#4b8c00;font-style:italic">Ctrl+Shift+A</div>
<svg class="a" style="left:893.5px;top:358.9px" width="17" height="17" viewBox="0 0 17 17"><path d="M0.8 1h7.5v11.5h-7.5z" fill="#f2f2f2" stroke="#9a9a9a" stroke-width="0.9"/><path d="M6.5 4.3h8.5v12h-8.5z" fill="#ececec" stroke="#8a8a8a" stroke-width="0.9"/><ellipse cx="3.2" cy="3.3" rx="1.8" ry="1.1" fill="none" stroke="#2f7fd0" stroke-width="1"/><ellipse cx="4.8" cy="7" rx="1.8" ry="1.1" fill="none" stroke="#2f7fd0" stroke-width="1"/><ellipse cx="9.2" cy="6.8" rx="1.8" ry="1.1" fill="none" stroke="#2f7fd0" stroke-width="1"/><ellipse cx="11.2" cy="10.2" rx="1.8" ry="1.1" fill="none" stroke="#2f7fd0" stroke-width="1"/><ellipse cx="11.2" cy="13.8" rx="1.8" ry="1.1" fill="none" stroke="#2f7fd0" stroke-width="1"/></svg><div class="a nw" style="left:926px;top:357.9px;font-size:12.5px;line-height:18px;color:#333">Clone...</div><div class="a nw" style="right:788px;top:359.9px;font-size:9.6px;line-height:15px;color:#2a8ca2;font-style:italic">Ctrl+Shift+D</div>
<svg class="a" style="left:893.5px;top:383px" width="17" height="17" viewBox="0 0 17 17"><circle cx="8.5" cy="8.8" r="6.8" fill="#e4483e" stroke="#c23227" stroke-width="0.9"/><path d="M2.5 6.5a6.5 6 0 0 1 12 0" fill="#f07068" opacity="0.5"/><rect x="4.2" y="7.4" width="8.6" height="2.9" rx="0.5" fill="#fff"/></svg><div class="a nw" style="left:926px;top:382px;font-size:12.5px;line-height:18px;color:#333">Delete</div><div class="a nw" style="right:788px;top:384px;font-size:9.6px;line-height:15px;color:#2a8ca2;font-style:italic">Del</div>
<svg class="a" style="left:893.5px;top:407px" width="17" height="17" viewBox="0 0 17 17"><rect x="0.6" y="1.5" width="1.9" height="14.5" fill="#b98a3e"/><path d="M2.5 1.8c2.2-0.8 4 0.2 5.5 1.2v8.2c-1.5-1-3.3-2-5.5-1.2z" fill="#e8483a"/><path d="M8 3c1.8 0.6 3.5 0.8 5.5-0.2v8.2c-2 1-3.7 0.8-5.5 0.2z" fill="#f07060"/><path d="M13.5 2.8l2.5 0v8.2l-2.5 0z" fill="#e04a3a"/></svg><div class="a nw" style="left:926px;top:406px;font-size:12.5px;line-height:18px;color:#333">Flag Item...</div><div class="a nw" style="right:788px;top:408px;font-size:9.6px;line-height:15px;color:#2a8ca2;font-style:italic">Ctrl+L</div>
<svg class="a" style="left:893.5px;top:430.8px" width="17" height="17" viewBox="0 0 17 17"><rect x="0.6" y="1.2" width="1.9" height="15" fill="#b98a3e"/><path d="M2.5 1.5c2.2-0.8 4 0.2 5.5 1.2v8.2c-1.5-1-3.3-2-5.5-1.2z" fill="#e8483a"/><path d="M8 2.7c1.8 0.6 3.5 0.8 5.5-0.2v8.2c-2 1-3.7 0.8-5.5 0.2z" fill="#f07060"/><path d="M13.5 2.5l2.5 0v8.2l-2.5 0z" fill="#e04a3a"/><path d="M7 9.8h4.5v-2.6l5.3 4.2-5.3 4.2v-2.6h-4.5z" fill="#72b82a" stroke="#4a8a10" stroke-width="0.6"/></svg><div class="a nw" style="left:926px;top:429.8px;font-size:12.5px;line-height:18px;color:#333">Go to Flagged</div><div class="a nw" style="right:788px;top:431.8px;font-size:9.6px;line-height:15px;color:#2a8ca2;font-style:italic">Ctrl+G</div>
<svg class="a" style="left:893.5px;top:454.9px" width="17" height="17" viewBox="0 0 17 17"><rect x="0.8" y="4.5" width="15.4" height="9.2" fill="#f2f7fc" stroke="#3a8ad0" stroke-width="1.1"/><rect x="2.6" y="7" width="5" height="3.8" fill="#3a8ad0"/><rect x="10" y="6.5" width="4.5" height="5" fill="#dfe6ee"/><path d="M9 2.2v12.4M7 2.2h4M7 14.6h4" stroke="#555" stroke-width="1"/></svg><div class="a nw" style="left:926px;top:453.9px;font-size:12.5px;line-height:18px;color:#333">Rename...</div><div class="a nw" style="right:788px;top:455.9px;font-size:9.6px;line-height:15px;color:#2a8ca2;font-style:italic">F2</div>
<div class="a nw" style="left:926px;top:477.7px;font-size:12.5px;line-height:18px;color:#333">Contents</div><svg class="a" style="left:1123px;top:481.7px" width="9" height="9" viewBox="0 0 9 9"><path d="M1 0.5l7 4-7 4 2-4z" fill="#222"/></svg>
<div class="a nw" style="left:926px;top:501.8px;font-size:12.5px;line-height:18px;color:#333">Foldering</div><svg class="a" style="left:1123px;top:505.8px" width="9" height="9" viewBox="0 0 9 9"><path d="M1 0.5l7 4-7 4 2-4z" fill="#222"/></svg>
<div class="a nw" style="left:926px;top:525.5px;font-size:12.5px;line-height:18px;color:#333">Send To</div><svg class="a" style="left:1123px;top:529.5px" width="9" height="9" viewBox="0 0 9 9"><path d="M1 0.5l7 4-7 4 2-4z" fill="#222"/></svg>
<svg class="a" style="left:893.5px;top:550.6px" width="17" height="17" viewBox="0 0 17 17"><g fill="#7a7a7a"><circle cx="10.7" cy="4.4" r="3.6"/><circle cx="5.5" cy="11.2" r="3.5"/></g><g stroke="#7a7a7a" stroke-width="1.6"><path d="M10.7 -0.2v9.2M6.1 4.4h9.2M7.4 1.1l6.6 6.6M14 1.1l-6.6 6.6"/><path d="M5.5 6.7v9M1 11.2h9M2.3 8l6.4 6.4M8.7 8l-6.4 6.4"/></g><circle cx="10.7" cy="4.4" r="1.3" fill="#fbfbfb"/><circle cx="5.5" cy="11.2" r="1.3" fill="#fbfbfb"/></svg><div class="a nw" style="left:926px;top:549.6px;font-size:12.5px;line-height:18px;color:#333">Activities</div><svg class="a" style="left:1123px;top:553.6px" width="9" height="9" viewBox="0 0 9 9"><path d="M1 0.5l7 4-7 4 2-4z" fill="#222"/></svg>
<svg class="a" style="left:893.5px;top:579.7px" width="17" height="17" viewBox="0 0 17 17"><path d="M2.5 0.8l6 9M6.8 0.8l1 9" stroke="#9a9a9a" stroke-width="1" fill="none"/><path d="M7.8 9.5l-2.5 4.5" stroke="#2f7fd0" stroke-width="1.3"/><circle cx="4.5" cy="14.6" r="1.6" fill="none" stroke="#2f7fd0" stroke-width="1.3"/><path d="M8 9.5l5 3" stroke="#2f7fd0" stroke-width="1.3"/><ellipse cx="13.5" cy="13.5" rx="2" ry="1.5" fill="none" stroke="#2f7fd0" stroke-width="1.3"/></svg><div class="a nw" style="left:926px;top:578.7px;font-size:12.5px;line-height:18px;color:#333">Cut</div><div class="a nw" style="right:788px;top:580.7px;font-size:9.6px;line-height:15px;color:#2a8ca2;font-style:italic">Ctrl+X</div>
<svg class="a" style="left:893.5px;top:603.7px" width="17" height="17" viewBox="0 0 17 17"><path d="M1 1h6.8l2.2 2.2v9.8h-9z" fill="#e4f0fa" stroke="#2f86cf" stroke-width="1.1"/><path d="M2 7h6.5v4.5h-6.5z" fill="#b8daf2"/><path d="M7.3 4.6h6.3l2.5 2.5v9.2h-8.8z" fill="#eef6fd" stroke="#2f86cf" stroke-width="1.1"/><path d="M8.5 10.5h6.3v4.5h-6.3z" fill="#b8daf2"/></svg><div class="a nw" style="left:926px;top:602.7px;font-size:12.5px;line-height:18px;color:#333">Copy</div><div class="a nw" style="right:788px;top:604.7px;font-size:9.6px;line-height:15px;color:#2a8ca2;font-style:italic">Ctrl+C</div>
<svg class="a" style="left:893.5px;top:632.4px" width="17" height="17" viewBox="0 0 17 17"><defs><linearGradient id="dng" x1="0" y1="0" x2="1" y2="1"><stop offset="0" stop-color="#7ab4ec"/><stop offset="1" stop-color="#2a6ec0"/></linearGradient></defs><path d="M5 0.8h6.5v8h4.3l-7.5 7.8-7.5-7.8h4.2z" fill="url(#dng)"/></svg><div class="a nw" style="left:926px;top:631.4px;font-size:12.5px;line-height:18px;color:#333">Move Down</div><div class="a nw" style="right:788px;top:633.4px;font-size:9.6px;line-height:15px;color:#2a8ca2;font-style:italic">Ctrl+Down</div>
<svg class="a" style="left:893.5px;top:661.7px" width="17" height="17" viewBox="0 0 17 17"><rect x="0.8" y="1" width="15.5" height="14.8" fill="#f6f6f6" stroke="#777" stroke-width="0.9"/><path d="M1 4.6h9.3M1 8.2h9.3M1 11.8h9.3" stroke="#b5b5b5" stroke-width="0.9"/><path d="M10.6 1v14.8" stroke="#777" stroke-width="0.9"/><rect x="11.2" y="6" width="4.6" height="4.5" fill="#bcd7ef"/><path d="M12 4.3l1.5-1.8 1.5 1.8zM12 12.5l1.5 1.8 1.5-1.8z" fill="#2a5a90"/></svg><div class="a nw" style="left:926px;top:660.7px;font-size:12.5px;line-height:18px;color:#333">View Properties</div><div class="a nw" style="right:788px;top:662.7px;font-size:9.6px;line-height:15px;color:#2a8ca2;font-style:italic">F12</div>
<div class="a" style="left:894px;top:573.0px;width:238px;height:1px;background:#dcdcdc"></div>
<div class="a" style="left:894px;top:626.0px;width:238px;height:1px;background:#dcdcdc"></div>
<div class="a" style="left:894px;top:655.0px;width:238px;height:1px;background:#dcdcdc"></div>

<!-- ================= DIALOG ================= -->
<div class="a" style="left:309px;top:439px;width:499px;height:354px;background:#212121;border:1px solid #3e3e3e;border-left-color:#262626;border-radius:5px"></div>
<div class="a" style="left:310px;top:440px;width:497px;height:49px;border-radius:5px 5px 0 0;background-color:#202020;background-image:linear-gradient(#272727 1px,transparent 1px),linear-gradient(90deg,#272727 1px,transparent 1px);background-size:5px 5px;border-bottom:1px solid #3a3a3a"></div>
<div class="a nw" style="left:325px;top:452px;font-size:18.3px;line-height:26px;font-weight:bold;color:#c8c8c8">Assign Document Type</div>
<div class="a" style="left:616px;top:448px;width:86px;height:32px;border:1.5px solid #22bccb;border-radius:6px"></div>
<div class="a nw" style="left:633.5px;top:456px;font-size:12.8px;line-height:18px;font-weight:bold;color:#22bccb;transform:scaleX(0.855);transform-origin:0 0">EXECUTE</div>
<div class="a" style="left:710px;top:448px;width:81px;height:32px;border:1.5px solid #e5607c;border-radius:6px"></div>
<div class="a nw" style="left:728px;top:456px;font-size:12.8px;line-height:18px;font-weight:bold;color:#e5607c;transform:scaleX(0.855);transform-origin:0 0">CANCEL</div>

<div class="a nw" style="left:325px;top:501.5px;font-size:13px;line-height:20px;font-weight:bold;color:#b8b8b8">GENERAL</div>
<svg class="a" style="left:779px;top:506px" width="12" height="12" viewBox="0 0 12 12"><path d="M1 1.5l5 8.5 5-8.5-5 4z" fill="#9a9a9a"/></svg>
<div class="a" style="left:325px;top:524px;width:186px;height:26px;background:#2b2b2b"></div>
<div class="a nw" style="left:345px;top:528px;font-size:14.5px;line-height:20px;color:#e68a2e">Content Type</div>
<div class="a" style="left:512px;top:525px;width:260px;height:23.5px;background:#1b1b1b;border:1px solid #555;border-radius:3px"></div>
<div class="a nw" style="left:520.5px;top:528px;font-size:14.5px;line-height:20px;color:#777">(none)</div>
<svg class="a" style="left:775px;top:531px" width="13" height="13" viewBox="0 0 13 13"><path d="M1 2.5h10.5M1 6.3h10.5M1 10.1h10.5" stroke="#a0a0a0" stroke-width="1.4"/></svg>
<div class="a nw" style="left:345px;top:554px;font-size:14.5px;line-height:20px;color:#b8b8b8">Secondary Types</div>
<div class="a" style="left:310px;top:592px;width:497px;height:1px;background:#3a3a3a"></div>
<div class="a nw" style="left:325px;top:610.5px;font-size:16.9px;line-height:22px;font-weight:bold;color:#d8d8c4;text-decoration:underline dotted;text-underline-offset:3px;text-decoration-thickness:1px">Content Type</div>
<div class="a" style="left:325px;top:639px;width:190px;height:1px;background:#3a3a3a"></div>
<div class="a nw" style="left:325px;top:647px;font-size:14.5px;line-height:20px;color:#e2e2e2">The content type to assign.</div>
<div class="a nw" style="left:325px;top:682.5px;font-size:13.8px;line-height:20px;font-weight:bold;color:#e2e2e2">See Also</div>
<div class="a nw" style="left:325px;top:710px;font-size:14.4px;line-height:19px;color:#d4d4c0;word-spacing:1.2px"><span class="lk">Behavior</span> <span class="dt">•</span> <span class="lk">Content Category</span> <span class="dt">•</span> <span class="lk">Content Model</span> <span class="dt">•</span> <span class="lk">Document Type</span> <span class="dt">•</span> <span class="lk">Form</span></div>
<div class="a nw" style="left:325px;top:729px;font-size:14.4px;line-height:19px;color:#d4d4c0"><span class="lk">Type</span> <span class="dt">•</span> <span class="lk">Page Type</span></div>

<!-- dropdown -->
<div class="a" style="left:512.5px;top:552px;width:324px;height:112px;background:#262626;border:1px solid #3a3a3a;border-radius:0 0 3px 3px"></div>
<svg class="a" style="left:522px;top:560px" width="17" height="17" viewBox="0 0 17 17"><circle cx="6.8" cy="6.8" r="4.6" stroke="#9a9a9a" stroke-width="1.8" fill="none"/><path d="M10.2 10.2l5 5" stroke="#9a9a9a" stroke-width="2.2"/></svg>
<div class="a" style="left:545.5px;top:556.5px;width:283px;height:23px;background:#1b1b1b;border:1px solid #3a3a3a;border-radius:3px"></div>
<div class="a" style="left:540px;top:589.5px;width:281px;height:20.5px;background:#333;border:1.5px solid #1fb3bd;border-radius:3px"></div>
<div class="a nw" style="left:567.5px;top:590px;font-size:14.5px;line-height:20px;color:#fff">(none)</div>
<div class="tri-d" style="left:528.5px;top:619.5px"></div>
<svg class="ic" style="left:545px;top:616px;width:17px;height:17px"><use href="#i-cm"/></svg>
<div class="a nw" style="left:568px;top:613px;font-size:14.6px;line-height:20px;color:#c8c8c8">Classification Project • Content Model</div>
<svg class="ic" style="left:561px;top:638px;width:17px;height:17px"><use href="#i-docs"/></svg>
<div class="a nw" style="left:583.5px;top:636px;font-size:14.2px;line-height:20px;color:#c8c8c8">Closing Disclosures</div>

<div class="a" style="left:306px;top:435px;width:532px;height:367.5px;border:2.8px solid #ffff00;box-shadow:0 0 0 1px rgba(5,5,25,0.6),inset 0 0 0 1px rgba(5,5,25,0.7)"></div>
</body></html>
